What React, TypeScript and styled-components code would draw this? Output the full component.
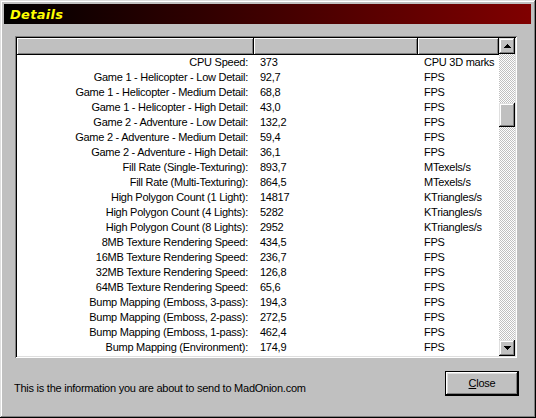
import React from "react";
import styled, { createGlobalStyle } from "styled-components";

const GlobalStyle = createGlobalStyle`
  html, body {
    margin: 0;
    padding: 0;
    background: #c0c0c0;
  }
  * {
    box-sizing: border-box;
  }
`;

const rows: [string, string, string][] = [
  ["CPU Speed:", "373", "CPU 3D marks"],
  ["Game 1 - Helicopter - Low Detail:", "92,7", "FPS"],
  ["Game 1 - Helicopter - Medium Detail:", "68,8", "FPS"],
  ["Game 1 - Helicopter - High Detail:", "43,0", "FPS"],
  ["Game 2 - Adventure - Low Detail:", "132,2", "FPS"],
  ["Game 2 - Adventure - Medium Detail:", "59,4", "FPS"],
  ["Game 2 - Adventure - High Detail:", "36,1", "FPS"],
  ["Fill Rate (Single-Texturing):", "893,7", "MTexels/s"],
  ["Fill Rate (Multi-Texturing):", "864,5", "MTexels/s"],
  ["High Polygon Count (1 Light):", "14817", "KTriangles/s"],
  ["High Polygon Count (4 Lights):", "5282", "KTriangles/s"],
  ["High Polygon Count (8 Lights):", "2952", "KTriangles/s"],
  ["8MB Texture Rendering Speed:", "434,5", "FPS"],
  ["16MB Texture Rendering Speed:", "236,7", "FPS"],
  ["32MB Texture Rendering Speed:", "126,8", "FPS"],
  ["64MB Texture Rendering Speed:", "65,6", "FPS"],
  ["Bump Mapping (Emboss, 3-pass):", "194,3", "FPS"],
  ["Bump Mapping (Emboss, 2-pass):", "272,5", "FPS"],
  ["Bump Mapping (Emboss, 1-pass):", "462,4", "FPS"],
  ["Bump Mapping (Environment):", "174,9", "FPS"],
];

const raised = `
  box-shadow: inset -1px -1px #000, inset 1px 1px #dfdfdf,
    inset -2px -2px #808080, inset 2px 2px #fff;
`;

const Window = styled.div`
  width: 536px;
  height: 418px;
  padding: 4px;
  background: #c0c0c0;
  display: flex;
  flex-direction: column;
  font-family: "Liberation Sans", Arial, sans-serif;
  font-size: 11px;
  letter-spacing: -0.25px;
  color: #000;
  ${raised}
`;

const TitleBar = styled.div`
  height: 20px;
  margin-right: 1px;
  display: flex;
  align-items: center;
  padding-left: 6px;
  background: linear-gradient(to right, #000 0%, #800000 100%);
`;

const Title = styled.span`
  font-family: "DejaVu Sans", Verdana, sans-serif;
  font-weight: bold;
  font-style: italic;
  font-size: 13px;
  color: #ffff00;
  letter-spacing: 0.3px;
`;

const Content = styled.div`
  flex: 1;
  display: flex;
  flex-direction: column;
  padding: 12px 15px 0 11px;
`;

const ListBox = styled.div`
  height: 322px;
  padding: 2px;
  background: #fff;
  display: flex;
  box-shadow: inset 1px 1px #808080, inset -1px -1px #fff,
    inset 2px 2px #000, inset -2px -2px #dfdfdf;
`;

const ListArea = styled.div`
  flex: 1;
  display: flex;
  flex-direction: column;
  overflow: hidden;
`;

const Columns = "237px 164px 81px";

const HeaderRow = styled.div`
  display: grid;
  grid-template-columns: ${Columns};
  height: 17px;
`;

const HeaderCell = styled.div`
  background: #c0c0c0;
  box-shadow: inset -1px -1px #000, inset 1px 1px #fff,
    inset -2px -2px #808080;
`;

const Row = styled.div`
  display: grid;
  grid-template-columns: ${Columns};
  height: 15px;
  line-height: 15px;
  white-space: nowrap;
`;

const Cell = styled.div<{ $right?: boolean }>`
  padding: ${(p) => (p.$right ? "0 6px 0 0" : "0 0 0 6px")};
  text-align: ${(p) => (p.$right ? "right" : "left")};
  overflow: hidden;
`;

const ScrollBar = styled.div`
  width: 16px;
  display: flex;
  flex-direction: column;
  background: repeating-conic-gradient(#c0c0c0 0% 25%, #fff 0% 50%) 0 0 / 2px
    2px;
`;

const ScrollButton = styled.div`
  width: 16px;
  height: 16px;
  background: #c0c0c0;
  display: flex;
  align-items: center;
  justify-content: center;
  ${raised}
`;

const Thumb = styled.div`
  width: 16px;
  height: 24px;
  margin-top: 49px;
  background: #c0c0c0;
  ${raised}
`;

const Track = styled.div`
  flex: 1;
`;

const Footer = styled.div`
  flex: 1;
  display: flex;
  align-items: center;
  justify-content: space-between;
  padding: 0 0 6px 0;
`;

const Note = styled.span`
  margin: 9px 0 0 -1px;
`;

const CloseButton = styled.button`
  width: 74px;
  height: 25px;
  margin-right: -2px;
  background: #c0c0c0;
  border: 1px solid #000;
  font-family: "Liberation Sans", Arial, sans-serif;
  font-size: 11px;
  letter-spacing: -0.25px;
  color: #000;
  padding: 0;
  box-shadow: inset -1px -1px #000, inset 1px 1px #fff,
    inset -2px -2px #808080, inset 2px 2px #dfdfdf;
`;

const Arrow = ({ down }: { down?: boolean }) => (
  <svg width="7" height="4" viewBox="0 0 7 4">
    <path
      d={down ? "M0 0H7L3.5 4Z" : "M3.5 0L7 4H0Z"}
      fill="#000"
      shapeRendering="crispEdges"
    />
  </svg>
);

export default function App() {
  return (
    <>
      <GlobalStyle />
      <Window>
        <TitleBar>
          <Title>Details</Title>
        </TitleBar>
        <Content>
          <ListBox>
            <ListArea>
              <HeaderRow>
                <HeaderCell />
                <HeaderCell />
                <HeaderCell />
              </HeaderRow>
              {rows.map(([label, value, unit]) => (
                <Row key={label}>
                  <Cell $right>{label}</Cell>
                  <Cell>{value}</Cell>
                  <Cell>{unit}</Cell>
                </Row>
              ))}
            </ListArea>
            <ScrollBar>
              <ScrollButton>
                <Arrow />
              </ScrollButton>
              <Thumb />
              <Track />
              <ScrollButton>
                <Arrow down />
              </ScrollButton>
            </ScrollBar>
          </ListBox>
          <Footer>
            <Note>This is the information you are about to send to MadOnion.com</Note>
            <CloseButton>
              <u>C</u>lose
            </CloseButton>
          </Footer>
        </Content>
      </Window>
    </>
  );
}
